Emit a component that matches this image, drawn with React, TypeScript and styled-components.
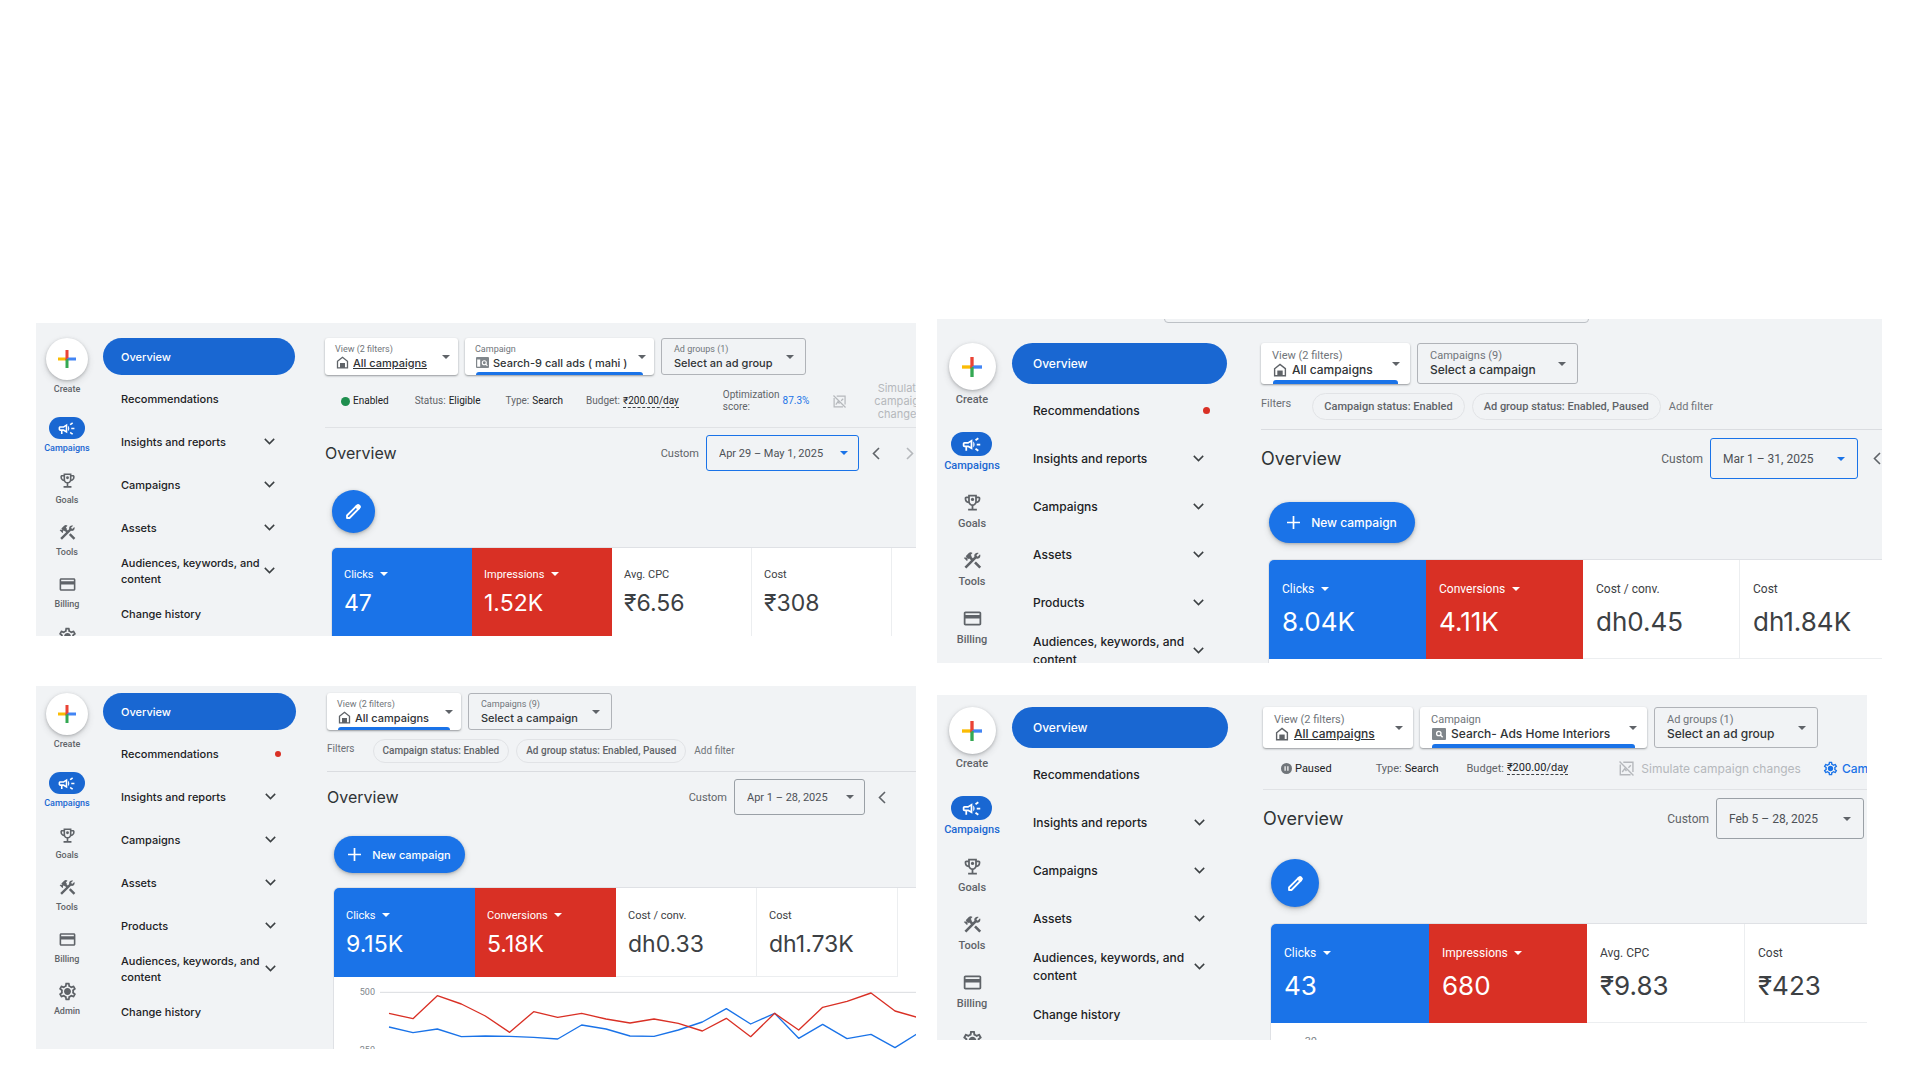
import React from "react";
import styled, { createGlobalStyle, ThemeProvider, css } from "styled-components";
import {
  MdOutlineCampaign,
  MdOutlineEmojiEvents,
  MdConstruction,
  MdOutlineCreditCard,
  MdOutlineSettings,
} from "react-icons/md";

/* ---------- sizes ---------- */

const compact = {
  rail: 62, create: 42, plus: 18, pillW: 36, pillH: 22, railIcon: 19, railPitch: 52, tiny: 9,
  railGap: 22, captionGap: 3, navW: 192, navGap: 5, row: 37, rowGap: 6, navPad: 18, navFont: 11,
  navLine: 16, chevRight: 20, dot: 6, dotRight: 15, mainGap: 30, field: 37, small: 9, body: 10,
  text: 11, value: 11, fieldPad: 10, fieldEnd: 8, iconGap: 4, house: 13, bar: 3, barPad: 11,
  chip: 24, chipPad: 9, filterGap: 11, title: 16, date: 36, dateEnd: 10, arrowBtn: 34, fab: 43,
  newW: 131, fabTop: 19, newTop: 21, actionBottom: 15, cell: 140, cellH: 89, cellPad: 12,
  cellTop: 18, number: 23, numberLine: 30, figureGap: 6, inset: 7, axisW: 46, axisTop: 9,
};

type Sizes = typeof compact;

const compactWide: Sizes = { ...compact, navW: 193, mainGap: 31, cell: 141, cellTop: 19 };

const roomy: Sizes = {
  rail: 70, create: 47, plus: 20, pillW: 41, pillH: 24, railIcon: 21, railPitch: 58, tiny: 11,
  railGap: 26, captionGap: 4, navW: 215, navGap: 5, row: 41, rowGap: 7, navPad: 21, navFont: 12,
  navLine: 18, chevRight: 23, dot: 7, dotRight: 17, mainGap: 34, field: 41, small: 11, body: 11,
  text: 12, value: 12, fieldPad: 11, fieldEnd: 10, iconGap: 5, house: 14, bar: 4, barPad: 12,
  chip: 27, chipPad: 11, filterGap: 14, title: 18, date: 41, dateEnd: 12, arrowBtn: 38, fab: 48,
  newW: 146, fabTop: 20, newTop: 23, actionBottom: 17, cell: 157, cellH: 99, cellPad: 13,
  cellTop: 21, number: 26, numberLine: 34, figureGap: 8, inset: 8, axisW: 51, axisTop: 13,
};

const roomyWide: Sizes = { ...roomy, navW: 216, mainGap: 35, cell: 158 };

const s = (key: keyof Sizes) => ({ theme }: any) => `${theme[key]}px`;

const display = `Inter, "Noto Sans", sans-serif`;
const text = `Roboto, "Noto Sans", sans-serif`;

/* ---------- page ---------- */

const GlobalStyle = createGlobalStyle`
  * { box-sizing: border-box; }
  body { margin: 0; background: #fff; font-family: ${text}; color: #202124; }
  button, select { font: inherit; color: inherit; border: 0; background: none; padding: 0; margin: 0; }
  button { cursor: pointer; }
  a { color: inherit; text-decoration: none; }
  svg { display: block; flex: none; }
`;

const Page = styled.main`
  display: flex;
  align-items: flex-start;
  gap: 21px;
  padding: 319px 38px 31px 36px;
`;

const Column = styled.div<{ $grow: number; $gap: number; $top: number }>`
  flex: ${(p) => p.$grow} 1 0;
  min-width: 0;
  display: flex;
  flex-direction: column;
  gap: ${(p) => p.$gap}px;
  padding-top: ${(p) => p.$top}px;
`;

const PanelBox = styled.section<{ $ratio: string; $top: number; $end: number }>`
  position: relative;
  display: flex;
  align-items: flex-start;
  aspect-ratio: ${(p) => p.$ratio};
  min-height: 0;
  overflow: hidden;
  background: #f1f3f5;
  padding-top: ${(p) => p.$top}px;
  margin-right: ${(p) => p.$end}px;
`;

const SearchEdge = styled.div`
  position: absolute;
  top: -30px;
  left: 24%;
  width: 45%;
  height: 34px;
  border: 1px solid #bdc1c6;
  border-radius: 4px;
`;

/* ---------- icon rail ---------- */

const Rail = styled.nav`
  flex: none;
  width: ${s("rail")};
  display: flex;
  flex-direction: column;
  align-items: center;
  color: #5f6368;
  font-size: ${s("tiny")};
  line-height: 12px;
  font-weight: 500;
`;

const CreateItem = styled.div`
  display: flex;
  flex-direction: column;
  align-items: center;
  gap: ${s("captionGap")};
  margin-bottom: ${s("railGap")};
`;

const CreateButton = styled.button`
  width: ${s("create")};
  height: ${s("create")};
  border-radius: 50%;
  background: #fff;
  display: grid;
  place-items: center;
  box-shadow: 0 1px 3px rgba(60, 64, 67, 0.3), 0 3px 7px rgba(60, 64, 67, 0.16);
`;

const RailLink = styled.a<{ $active?: boolean }>`
  height: ${s("railPitch")};
  display: flex;
  flex-direction: column;
  align-items: center;
  gap: ${s("captionGap")};
  ${(p) => p.$active && css`color: #1967d2;`}
`;

const RailIcon = styled.span<{ $active?: boolean }>`
  width: ${s("pillW")};
  height: ${s("pillH")};
  border-radius: 99px;
  display: grid;
  place-items: center;
  ${(p) => p.$active && css`background: #1967d2; color: #fff;`}
  > svg { width: ${s("railIcon")}; height: ${s("railIcon")}; }
`;

/* ---------- section list ---------- */

const Sections = styled.nav`
  flex: none;
  width: ${s("navW")};
  margin-left: ${s("navGap")};
  display: flex;
  flex-direction: column;
  gap: ${s("rowGap")};
  font-family: ${display};
  font-size: ${s("navFont")};
  line-height: ${s("navLine")};
  font-weight: 500;
`;

const SectionLink = styled.a<{ $active?: boolean; $dot?: boolean }>`
  height: ${s("row")};
  border-radius: 99px;
  display: flex;
  align-items: center;
  justify-content: space-between;
  padding-left: ${s("navPad")};
  padding-right: ${({ theme, $dot }: any) => ($dot ? theme.dotRight : theme.chevRight)}px;
  color: #202124;
  ${(p) => p.$active && css`background: #1967d2; color: #fff; margin-bottom: -1px;`}
`;

const Dot = styled.span`
  width: ${s("dot")};
  height: ${s("dot")};
  border-radius: 50%;
  background: #d93025;
`;

/* ---------- main area ---------- */

const Main = styled.div`
  flex: 1 1 0;
  min-width: 0;
  margin-left: ${s("mainGap")};
`;

const Fields = styled.div`
  display: flex;
  gap: 7px;
`;

const FieldBox = styled.label<{ $outlined?: boolean; $w: number }>`
  position: relative;
  flex: none;
  width: ${(p) => p.$w}px;
  height: ${s("field")};
  border-radius: 3px;
  display: flex;
  align-items: center;
  justify-content: space-between;
  padding: 0 ${s("fieldEnd")} 0 ${s("fieldPad")};
  background: #fff;
  color: #5f6368;
  box-shadow: 0 1px 2px rgba(60, 64, 67, 0.5);
  ${(p) =>
    p.$outlined &&
    css`
      background: none;
      box-shadow: none;
      border: 1px solid #b0b3b8;
      padding-left: 12px;
      padding-right: 11px;
    `}
`;

const FieldText = styled.span`
  display: flex;
  flex-direction: column;
`;

const FieldLabel = styled.span`
  font-size: ${s("small")};
  line-height: 12px;
  color: #70757a;
`;

const FieldValue = styled.span`
  display: flex;
  align-items: center;
  gap: ${s("iconGap")};
  > svg { margin-left: 1px; }
`;

const Picker = styled.select<{ $underline?: boolean }>`
  appearance: none;
  font-family: ${display};
  font-size: ${s("value")};
  line-height: 16px;
  height: 16px;
  font-weight: 500;
  color: #303336;
  ${(p) => p.$underline && css`text-decoration: underline;`}
`;

const FieldBar = styled.span`
  position: absolute;
  left: ${s("barPad")};
  right: ${s("barPad")};
  bottom: 0;
  height: ${s("bar")};
  border-radius: 3px 3px 0 0;
  background: #1a73e8;
`;

const StatusRow = styled.div<{ $h: number }>`
  height: ${(p) => p.$h}px;
  display: flex;
  align-items: center;
  border-bottom: 1px solid #e0e2e5;
  font-size: ${s("body")};
  line-height: 12px;
  color: #5f6368;
  white-space: nowrap;
  overflow: hidden;
`;

const Status = styled.span<{ $before: number }>`
  display: flex;
  align-items: center;
  gap: 3px;
  flex: none;
  margin-left: ${(p) => p.$before}px;
  b { font-weight: 400; color: #202124; }
  u { color: #202124; text-decoration: none; border-bottom: 1px dashed #3c4043; }
  a { color: #1a73e8; }
`;

const StateDot = styled.span`
  width: 9px;
  height: 9px;
  border-radius: 50%;
  background: #1e8e4e;
`;

const Simulate = styled.button<{ $before: number }>`
  flex: none;
  margin-left: ${(p) => p.$before}px;
  font-family: ${display};
  font-size: ${s("value")};
  line-height: 13px;
  color: #b5b8bc;
  text-align: center;
`;

const CampaignSettings = styled.a<{ $before: number }>`
  flex: none;
  margin-left: ${(p) => p.$before}px;
  display: flex;
  align-items: center;
  gap: 4px;
  font-family: ${display};
  font-size: ${s("value")};
  font-weight: 500;
  color: #1a73e8;
`;

const FilterRow = styled.div<{ $h: number }>`
  height: ${(p) => p.$h}px;
  display: flex;
  align-items: center;
  gap: 7px;
  border-bottom: 1px solid #dadce0;
  font-size: ${s("body")};
  color: #6b6f74;
`;

const FilterName = styled.span`
  align-self: flex-start;
  margin-top: 13px;
  margin-right: ${s("filterGap")};
`;

const Chip = styled.button`
  height: ${s("chip")};
  padding: 0 ${s("chipPad")};
  border: 1px solid #e1e3e6;
  border-radius: 99px;
  font-weight: 500;
  color: #5f6368;
`;

const AddFilter = styled.button`
  margin-left: 1px;
  color: #70757a;
`;

const TitleRow = styled.div<{ $bleed: number }>`
  display: flex;
  align-items: center;
  margin-top: ${s("inset")};
  margin-right: ${(p) => -p.$bleed}px;
  height: ${s("date")};
`;

const Title = styled.h1`
  margin: 0 auto 0 0;
  font-family: ${display};
  font-weight: 400;
  font-size: ${s("title")};
  color: #303336;
`;

const DateLabel = styled.label`
  display: flex;
  align-items: center;
  gap: 7px;
  height: 100%;
  font-size: ${s("text")};
  color: #5f6368;
`;

const DateBox = styled.span<{ $focus?: boolean; $w: number }>`
  width: ${(p) => p.$w}px;
  height: 100%;
  display: flex;
  align-items: center;
  justify-content: space-between;
  padding: 0 ${s("dateEnd")} 0 12px;
  border: 1px solid ${(p) => (p.$focus ? "#1a73e8" : "#9aa0a6")};
  border-radius: 3px;
  color: ${(p) => (p.$focus ? "#1a73e8" : "#5f6368")};
  select { appearance: none; color: #4d5156; }
`;

const ArrowButton = styled.button<{ $faint?: boolean }>`
  width: ${s("arrowBtn")};
  flex: none;
  display: grid;
  place-items: center;
  color: ${(p) => (p.$faint ? "#b5b8bc" : "#5f6368")};
`;

const Action = styled.button<{ $wide?: boolean }>`
  margin: ${({ theme, $wide }: any) => ($wide ? theme.newTop : theme.fabTop)}px 0 ${s("actionBottom")} ${s("inset")};
  width: ${({ theme, $wide }: any) => ($wide ? theme.newW : theme.fab)}px;
  height: ${({ theme, $wide }: any) => ($wide ? theme.row : theme.fab)}px;
  border-radius: 99px;
  background: #1a73e8;
  color: #fff;
  display: flex;
  align-items: center;
  justify-content: center;
  gap: 11px;
  font-family: ${display};
  font-size: ${s("value")};
  font-weight: 500;
  box-shadow: 0 1px 3px rgba(60, 64, 67, 0.3), 0 3px 6px rgba(60, 64, 67, 0.18);
`;

const Sheet = styled.div`
  margin-left: ${s("inset")};
  background: #fff;
  border-top-left-radius: 5px;
  box-shadow: 0 0 0 1px #dfe1e5;
  overflow: hidden;
  min-height: 200px;
`;

const Cells = styled.div`
  display: flex;
`;

const Cell = styled.div<{ $tone?: string }>`
  flex: none;
  width: ${s("cell")};
  height: ${s("cellH")};
  padding: ${s("cellTop")} 0 0 ${s("cellPad")};
  border-right: 1px solid #eceef0;
  border-bottom: 1px solid #eceef0;
  color: #3c4043;
  ${(p) => p.$tone && css`background: ${p.$tone}; border-color: ${p.$tone}; color: #fff;`}
`;

const Metric = styled.label`
  display: flex;
  align-items: center;
  gap: 6px;
  height: 16px;
  font-size: ${s("text")};
  select { appearance: none; height: 16px; }
`;

const Figure = styled.div`
  margin-top: ${s("figureGap")};
  font-family: ${display};
  font-size: ${s("number")};
  line-height: ${s("numberLine")};
`;

const ChartBox = styled.div`
  display: flex;
  align-items: flex-start;
`;

const Axis = styled.div`
  flex: none;
  width: ${s("axisW")};
  padding-right: 5px;
  display: flex;
  flex-direction: column;
  gap: 46px;
  margin-top: ${s("axisTop")};
  text-align: right;
  font-size: ${s("tiny")};
  line-height: 12px;
  color: #80868b;
`;

const Plot = styled.svg`
  flex: 1 1 0;
  min-width: 0;
  overflow: hidden;
`;

/* ---------- drawings ---------- */

const Caret = () => (
  <svg width="8" height="4" viewBox="0 0 8 4" fill="currentColor"><path d="M0 0h8L4 4z" /></svg>
);

const Down = () => (
  <svg width="11" height="7" viewBox="0 0 11 7" fill="none" stroke="#3c4043" strokeWidth="1.5"><path d="M.8.9 5.5 5.6 10.200.9" /></svg>
);

const Side = ({ flip }: { flip?: boolean }) => (
  <svg width="8" height="13" viewBox="0 0 8 13" fill="none" stroke="currentColor" strokeWidth="1.6">
    <path d={flip ? "M1 1l5.500 5.500L1 12" : "M7 1 1.500 6.500 7 12"} />
  </svg>
);

const Plus = ({ size }: { size: number }) => (
  <svg width={size} height={size} viewBox="0 0 18 18">
    <path fill="#fbbc04" d="M0 7.500h9v3H0z" />
    <path fill="#4285f4" d="M9 7.500h9v3H9z" />
    <path fill="#34a853" d="M7.500 9h3v9h-3z" />
    <path fill="#ea4335" d="M7.500 0h3v7.500l-3 3z" />
  </svg>
);

const House = ({ size }: { size: number }) => (
  <svg width={size} height={size} viewBox="0 0 13 13" fill="none" stroke="#5f6368" strokeWidth="1.300">
    <path d="M1.500 5.300 6.500 1.300l5 4v6.600h-10z" />
    <path fill="#5f6368" stroke="none" d="M4 7h5v5H4z" />
  </svg>
);

const CallAds = () => (
  <svg width="13" height="11" viewBox="0 0 13 11">
    <rect width="13" height="11" rx="1" fill="#80868b" />
    <path fill="#fff" d="M1.200 2.500h3v7.200h-3z" />
    <circle cx="8.300" cy="5.700" r="2" fill="none" stroke="#fff" strokeWidth="1.100" />
    <path d="m9.800 7.200 1.600 1.600" stroke="#fff" strokeWidth="1.100" />
  </svg>
);

const SearchAds = () => (
  <svg width="14" height="12" viewBox="0 0 14 12">
    <rect width="14" height="12" rx="1" fill="#80868b" />
    <circle cx="6.800" cy="5.500" r="2.200" fill="none" stroke="#fff" strokeWidth="1.300" />
    <path d="m8.400 7.100 2.200 2.200" stroke="#fff" strokeWidth="1.400" />
  </svg>
);

const NoChart = ({ size }: { size: number }) => (
  <svg width={size} height={size} viewBox="0 0 14 14" fill="none" stroke="#b5b8bc" strokeWidth="1.300">
    <path d="M4 1.200h9v9M1.200 3.200v9.600h9.600M.5.500l13 13M3 10.300l2.300-3 1.700 2M8.800 6.200 11 4" />
  </svg>
);

const Pencil = () => (
  <svg width="17" height="17" viewBox="0 0 17 17" fill="none" stroke="#fff" strokeWidth="1.800" strokeLinejoin="round">
    <path d="M2 15v-2.500L11.900 2.600q1.200-1 2.300.1t.1 2.300L4.500 15z" />
    <path fill="#fff" d="m10.800 3.700 1.500-1.300q1-.6 1.900.300t.3 1.900l-1.300 1.500z" />
  </svg>
);

const PausedMark = () => (
  <svg width="11" height="11" viewBox="0 0 11 11"><circle cx="5.500" cy="5.500" r="5.500" fill="#70757a" /><path fill="#fff" d="M3.500 3.200h1.200v4.600H3.500zM6.300 3.200h1.200v4.600H6.300z" /></svg>
);

const PlusWhite = () => (
  <svg width="13" height="13" viewBox="0 0 13 13" stroke="#fff" strokeWidth="1.700"><path d="M6.500 0v13M0 6.500h13" /></svg>
);

const Trophy = () => (
  <svg viewBox="0 0 24 24" fill="currentColor"><MdOutlineEmojiEvents size={24} /><circle cx="12" cy="8.500" r="1.800" /></svg>
);

const Gear = () => (
  <svg viewBox="1 1 22 22" width="15" height="15" fill="currentColor"><MdOutlineSettings size={24} /><circle cx="12" cy="12" r="3" /></svg>
);

/* ---------- parts ---------- */

const railItems = [
  { name: "Campaigns", icon: <MdOutlineCampaign /> },
  { name: "Goals", icon: <Trophy /> },
  { name: "Tools", icon: <MdConstruction /> },
  { name: "Billing", icon: <MdOutlineCreditCard /> },
  { name: "Admin", icon: <Gear /> },
];

type FieldProps = {
  label: string; value: string; w: number; icon?: React.ReactNode;
  outlined?: boolean; bar?: boolean; underline?: boolean;
};

const Field = ({ label, value, w, icon, outlined, bar, underline }: FieldProps) => (
  <FieldBox $w={w} $outlined={outlined}>
    <FieldText>
      <FieldLabel>{label}</FieldLabel>
      <FieldValue>
        {icon}
        <Picker $underline={underline}><option>{value}</option></Picker>
      </FieldValue>
    </FieldText>
    <Caret />
    {bar && <FieldBar />}
  </FieldBox>
);

const Filters = ({ h }: { h: number }) => (
  <FilterRow $h={h}>
    <FilterName>Filters</FilterName>
    <Chip>Campaign status: Enabled</Chip>
    <Chip>Ad group status: Enabled, Paused</Chip>
    <AddFilter>Add filter</AddFilter>
  </FilterRow>
);

type MetricData = { name: string; value: string; tone?: string };

type PanelProps = {
  sizes: Sizes; ratio: string; top: number; end?: number; edge?: boolean; products?: boolean;
  fields: React.ReactNode; info: React.ReactNode; date: string; dateW: number; focus?: boolean;
  bleed: number; arrows: number; creating?: boolean; metrics: MetricData[]; children?: React.ReactNode;
};

const Panel = (p: PanelProps) => (
  <ThemeProvider theme={p.sizes}>
    <PanelBox $ratio={p.ratio} $top={p.top} $end={p.end ?? 0}>
      {p.edge && <SearchEdge />}
      <Rail>
        <CreateItem>
          <CreateButton aria-label="Create"><Plus size={p.sizes.plus} /></CreateButton>
          <span>Create</span>
        </CreateItem>
        {railItems.map((item, i) => (
          <RailLink key={item.name} href="#" $active={i === 0}>
            <RailIcon $active={i === 0}>{item.icon}</RailIcon>
            {item.name}
          </RailLink>
        ))}
      </Rail>
      <Sections>
        <SectionLink href="#" $active>Overview</SectionLink>
        <SectionLink href="#" $dot>Recommendations{p.products && <Dot />}</SectionLink>
        <SectionLink href="#">Insights and reports<Down /></SectionLink>
        <SectionLink href="#">Campaigns<Down /></SectionLink>
        <SectionLink href="#">Assets<Down /></SectionLink>
        {p.products && <SectionLink href="#">Products<Down /></SectionLink>}
        <SectionLink href="#"><span>Audiences, keywords, and<br />content</span><Down /></SectionLink>
        <SectionLink href="#">Change history</SectionLink>
      </Sections>
      <Main>
        <Fields>{p.fields}</Fields>
        {p.info}
        <TitleRow $bleed={p.bleed}>
          <Title>Overview</Title>
          <DateLabel>
            Custom
            <DateBox $w={p.dateW} $focus={p.focus}>
              <select><option>{p.date}</option></select>
              <Caret />
            </DateBox>
          </DateLabel>
          {p.arrows > 0 && <ArrowButton aria-label="Previous period"><Side /></ArrowButton>}
          {p.arrows > 1 && <ArrowButton aria-label="Next period" $faint><Side flip /></ArrowButton>}
        </TitleRow>
        {p.creating ? (
          <Action $wide><PlusWhite />New campaign</Action>
        ) : (
          <Action aria-label="Edit"><Pencil /></Action>
        )}
        <Sheet>
          <Cells>
            {p.metrics.map((m) => (
              <Cell key={m.name} $tone={m.tone}>
                <Metric>
                  {m.tone ? (
                    <><select aria-label="Metric"><option>{m.name}</option></select><Caret /></>
                  ) : m.name}
                </Metric>
                <Figure>{m.value}</Figure>
              </Cell>
            ))}
          </Cells>
          {p.children}
        </Sheet>
      </Main>
    </PanelBox>
  </ThemeProvider>
);

const BLUE = "#1a73e8";
const RED = "#d93025";

const conversions = [109, 125, 56, 81, 117, 166, 104, 121, 109, 126, 138, 126, 139, 162, 124, 179, 109, 159, 91, 73, 48, 102, 123];
const clicks = [150, 167, 156, 179, 177, 178, 181, 186, 144, 156, 177, 178, 159, 135, 95, 141, 109, 184, 142, 185, 172, 212, 166];
const line = (ys: number[]) => ys.map((y, i) => `${Math.round(27 + i * 72.300)},${y}`).join(" ");

export default function App() {
  return (
    <>
      <GlobalStyle />
      <Page>
        <Column $grow={880} $gap={50} $top={4}>
          <Panel
            sizes={compact} ratio="880 / 313" top={15} date="Apr 29 – May 1, 2025" dateW={153} focus
            bleed={11} arrows={2}
            fields={
              <>
                <Field label="View (2 filters)" value="All campaigns" w={133} icon={<House size={13} />} underline />
                <Field label="Campaign" value="Search-9 call ads ( mahi )" w={189} icon={<CallAds />} bar />
                <Field label="Ad groups (1)" value="Select an ad group" w={145} outlined />
              </>
            }
            info={
              <StatusRow $h={53}>
                <Status $before={16}><StateDot /><b>Enabled</b></Status>
                <Status $before={26}>Status: <b>Eligible</b></Status>
                <Status $before={25}>Type: <b>Search</b></Status>
                <Status $before={23}>Budget: <u>₹200.00/day</u></Status>
                <Status $before={44}><span>Optimization<br />score:</span><a href="#">87.3%</a></Status>
                <Status $before={24}><NoChart size={13} /></Status>
                <Simulate $before={28}>Simulate<br />campaign<br />changes</Simulate>
              </StatusRow>
            }
            metrics={[
              { name: "Clicks", value: "47", tone: BLUE },
              { name: "Impressions", value: "1.52K", tone: RED },
              { name: "Avg. CPC", value: "₹6.56" },
              { name: "Cost", value: "₹308" },
            ]}
          />
          <Panel
            sizes={compactWide} ratio="880 / 363" top={7} date="Apr 1 – 28, 2025" dateW={131}
            bleed={-17} arrows={1} products creating
            fields={
              <>
                <Field label="View (2 filters)" value="All campaigns" w={134} icon={<House size={13} />} bar />
                <Field label="Campaigns (9)" value="Select a campaign" w={144} outlined />
              </>
            }
            info={<Filters h={42} />}
            metrics={[
              { name: "Clicks", value: "9.15K", tone: BLUE },
              { name: "Conversions", value: "5.18K", tone: RED },
              { name: "Cost / conv.", value: "dh0.33" },
              { name: "Cost", value: "dh1.73K" },
            ]}
          >
            <ChartBox>
              <Axis><span>500</span><span>250</span></Axis>
              <Plot viewBox="0 0 1608 240" fill="none" strokeWidth="4" strokeLinejoin="round">
                <path d="M0 46h1700" stroke="#dadce0" strokeWidth="3" />
                <polyline points={line(clicks)} stroke={BLUE} />
                <polyline points={line(conversions)} stroke={RED} />
              </Plot>
            </ChartBox>
          </Panel>
        </Column>
        <Column $grow={945} $gap={32} $top={0}>
          <Panel
            sizes={roomy} ratio="945 / 344" top={24} date="Mar 1 – 31, 2025" dateW={148} focus
            bleed={14} arrows={1} products creating edge
            fields={
              <>
                <Field label="View (2 filters)" value="All campaigns" w={149} icon={<House size={14} />} bar />
                <Field label="Campaigns (9)" value="Select a campaign" w={161} outlined />
              </>
            }
            info={<Filters h={46} />}
            metrics={[
              { name: "Clicks", value: "8.04K", tone: BLUE },
              { name: "Conversions", value: "4.11K", tone: RED },
              { name: "Cost / conv.", value: "dh0.45" },
              { name: "Cost", value: "dh1.84K" },
            ]}
          />
          <Panel
            sizes={roomyWide} ratio="930 / 345" top={12} end={15} date="Feb 5 – 28, 2025" dateW={148}
            bleed={-3} arrows={0}
            fields={
              <>
                <Field label="View (2 filters)" value="All campaigns" w={150} icon={<House size={14} />} underline />
                <Field label="Campaign" value="Search- Ads Home Interiors" w={227} icon={<SearchAds />} bar />
                <Field label="Ad groups (1)" value="Select an ad group" w={164} outlined />
              </>
            }
            info={
              <StatusRow $h={42}>
                <Status $before={18}><PausedMark /><b>Paused</b></Status>
                <Status $before={44}>Type: <b>Search</b></Status>
                <Status $before={28}>Budget: <u>₹200.00/day</u></Status>
                <Status $before={51}><NoChart size={15} /></Status>
                <Simulate $before={7}>Simulate campaign changes</Simulate>
                <CampaignSettings $before={22} href="#"><Gear />Campaign settings</CampaignSettings>
              </StatusRow>
            }
            metrics={[
              { name: "Clicks", value: "43", tone: BLUE },
              { name: "Impressions", value: "680", tone: RED },
              { name: "Avg. CPC", value: "₹9.83" },
              { name: "Cost", value: "₹423" },
            ]}
          >
            <ChartBox><Axis><span>30</span></Axis></ChartBox>
          </Panel>
        </Column>
      </Page>
    </>
  );
}
